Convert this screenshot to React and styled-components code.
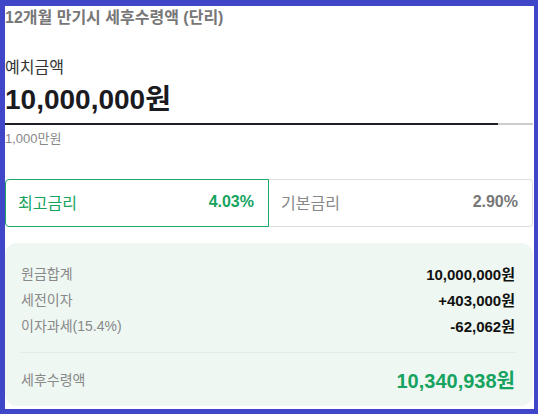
import React from 'react'
import styled, { createGlobalStyle } from 'styled-components'

const GlobalStyle = createGlobalStyle`
  html, body { margin: 0; padding: 0; }
  body {
    font-family: "Liberation Sans", "Noto Sans CJK KR", sans-serif;
    background: #4046c8;
  }
  * { box-sizing: border-box; }
`

const Frame = styled.div`
  width: 538px;
  height: 414px;
  border-style: solid;
  border-color: #4046c8;
  border-width: 6px 4px 5px 5px;
  background: #fff;
  padding-right: 1px;
  overflow: hidden;
`

const Title = styled.h2`
  margin: 0;
  font-size: 16px;
  line-height: 24px;
  font-weight: 700;
  color: #777;
`

const FieldLabel = styled.div`
  margin-top: 26px;
  font-size: 16px;
  line-height: 24px;
  color: #333;
`

const Amount = styled.div`
  margin-top: 2px;
  font-size: 28px;
  line-height: 36px;
  font-weight: 700;
  color: #1a1a1f;
`

const Track = styled.div`
  margin-top: 5px;
  height: 2px;
  background: #cccccc;
  display: flex;
`

const Fill = styled.div`
  height: 100%;
  background: #1f1f25;
`

const Caption = styled.div`
  margin-top: 5px;
  font-size: 13px;
  line-height: 18px;
  color: #888;
`

const Rates = styled.div`
  margin-top: 31px;
  display: grid;
  grid-template-columns: 1fr 1fr;
`

const RateBox = styled.div`
  height: 48px;
  display: flex;
  align-items: center;
  justify-content: space-between;
  padding: 0 14px 2px 12px;
  font-size: 16px;
  border: 1px solid ${p => (p.$active ? '#1aa864' : '#dedede')};
  border-radius: ${p => (p.$active ? '4px 0 0 4px' : '0 4px 4px 0')};
  ${p => (p.$active ? 'position: relative; z-index: 1;' : 'border-left: none;')}
  color: ${p => (p.$active ? '#15a35e' : '#888')};

  b {
    font-weight: 700;
    color: ${p => (p.$active ? '#15a35e' : '#777')};
  }
`

const Summary = styled.div`
  margin-top: 16px;
  background: #eef7f2;
  border-radius: 12px;
  padding: 17px 18px 13px 16px;
`

const Row = styled.div`
  display: flex;
  justify-content: space-between;
  align-items: center;
  height: ${p => (p.$total ? '28px' : '26px')};
  font-size: 14px;
  color: #888;

  b {
    font-weight: 700;
    font-size: ${p => (p.$total ? '20px' : '15px')};
    color: ${p => (p.$total ? '#16a35f' : '#111')};
  }
`

const Divider = styled.hr`
  border: none;
  height: 1px;
  background: #e2ece6;
  margin: 14px 0 12px;
`

const rows = [
  ['원금합계', '10,000,000원'],
  ['세전이자', '+403,000원'],
  ['이자과세(15.4%)', '-62,062원'],
]

export default function App() {
  const fill = 93.4
  return (
    <Frame>
      <GlobalStyle />
      <Title>12개월 만기시 세후수령액 (단리)</Title>
      <FieldLabel>예치금액</FieldLabel>
      <Amount>10,000,000원</Amount>
      <Track>
        <Fill style={{ width: `${fill}%` }} />
      </Track>
      <Caption>1,000만원</Caption>
      <Rates>
        <RateBox $active>
          <span>최고금리</span>
          <b>4.03%</b>
        </RateBox>
        <RateBox>
          <span>기본금리</span>
          <b>2.90%</b>
        </RateBox>
      </Rates>
      <Summary>
        {rows.map(([label, value]) => (
          <Row key={label}>
            <span>{label}</span>
            <b>{value}</b>
          </Row>
        ))}
        <Divider />
        <Row $total>
          <span>세후수령액</span>
          <b>10,340,938원</b>
        </Row>
      </Summary>
    </Frame>
  )
}
